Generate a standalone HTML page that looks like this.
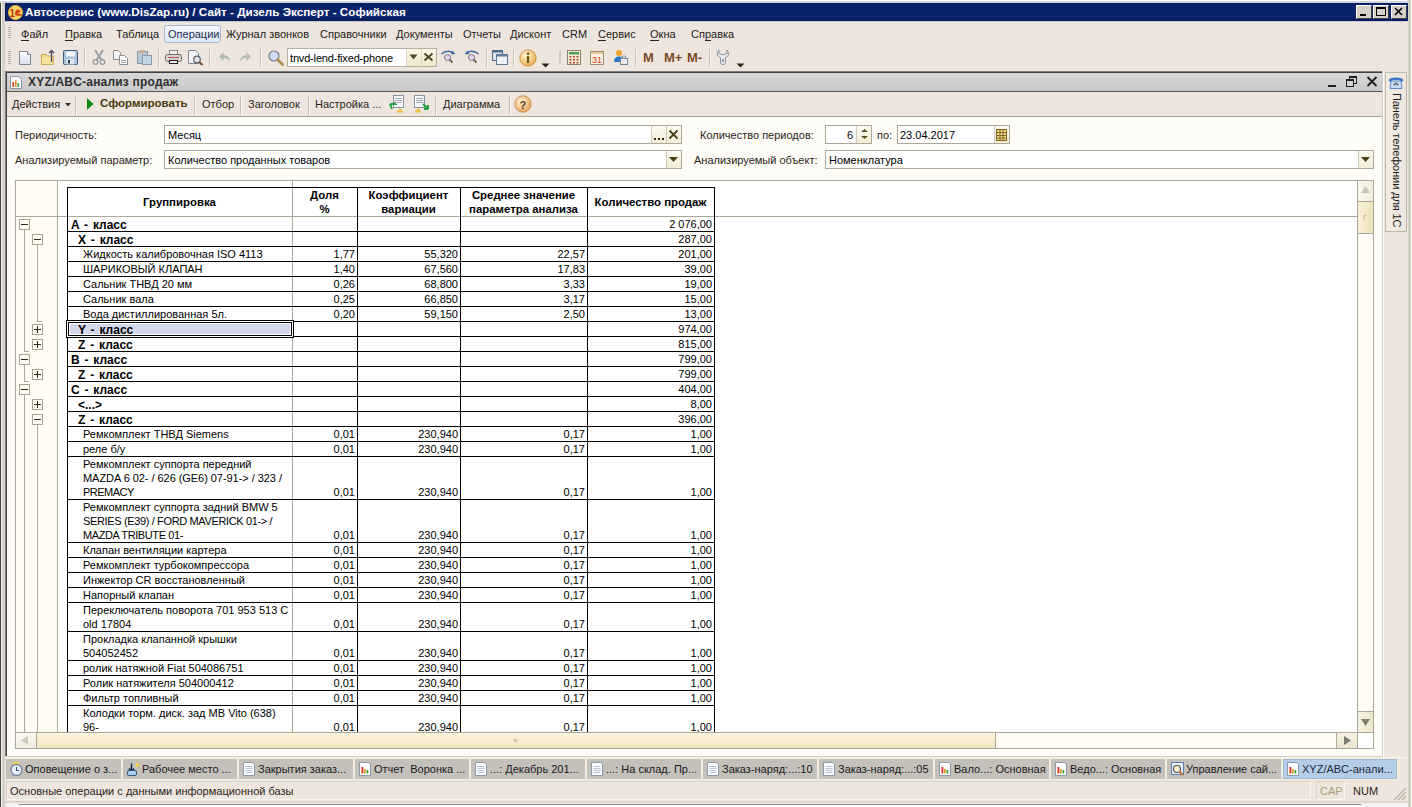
<!DOCTYPE html><html><head><meta charset="utf-8"><style>
html,body{margin:0;padding:0}
body{width:1412px;height:807px;position:relative;overflow:hidden;background:#EEE6DE;font-family:"Liberation Sans",sans-serif;color:#1a1a1a}
div{position:absolute;box-sizing:border-box}
.t{white-space:nowrap;line-height:13px}
.b{font-weight:bold}
u{text-decoration:none;border-bottom:1px solid currentColor}
</style></head><body>
<div style="left:0px;top:0px;width:1px;height:807px;background:#45453F"></div>
<div style="left:1px;top:0px;width:1px;height:807px;background:#F4F4EE"></div>
<div style="left:2px;top:0px;width:3px;height:807px;background:#D4D0C8"></div>
<div style="left:0px;top:0px;width:1412px;height:1px;background:#FFFFFF"></div>
<div style="left:0px;top:1px;width:1412px;height:2px;background:#D2D6E0"></div>
<div style="left:1408px;top:0px;width:4px;height:807px;background:#D4D0C8"></div>
<div style="left:1411px;top:0px;width:1px;height:807px;background:#FFFFFF"></div>
<div style="left:5px;top:3px;width:1403px;height:18px;background:linear-gradient(#08205E,#0A246A 20%,#0A246A 80%,#061A55)"></div>
<div style="left:5px;top:21px;width:1403px;height:1px;background:#C8CCD8"></div>
<svg style="position:absolute;left:8px;top:5px" width="15" height="15" viewBox="0 0 15 15"><circle cx="7.5" cy="7.5" r="7" fill="#FBD66A"/><circle cx="7.5" cy="7.5" r="7" fill="none" stroke="#F3B43A" stroke-width="1"/><text x="1.5" y="11.5" font-family="Liberation Sans" font-weight="bold" font-size="10" fill="#C8320A">1</text><path d="M7 9.5 Q7 4 10.5 4.5 Q13 5 12 7.5 L9.5 8 Q11 9.5 14 9 L13.5 10.5 Q8 11.5 7 9.5Z" fill="#D2400C"/></svg>
<div class="t" style="left:25px;top:5px;font-size:11.7px;color:#fff;font-weight:bold">Автосервис (www.DisZap.ru) / Сайт - Дизель Эксперт - Софийская</div>
<div style="left:1356px;top:5px;width:16px;height:14px;background:#D4D0C8;border-top:1px solid #fff;border-left:1px solid #fff;border-right:1px solid #404040;border-bottom:1px solid #404040"></div>
<div style="left:1373px;top:5px;width:16px;height:14px;background:#D4D0C8;border-top:1px solid #fff;border-left:1px solid #fff;border-right:1px solid #404040;border-bottom:1px solid #404040"></div>
<div style="left:1391px;top:5px;width:16px;height:14px;background:#D4D0C8;border-top:1px solid #fff;border-left:1px solid #fff;border-right:1px solid #404040;border-bottom:1px solid #404040"></div>
<svg style="position:absolute;left:1356px;top:5px" width="16" height="14" viewBox="0 0 16 14"><rect x="4" y="9" width="6" height="2" fill="#000"/></svg>
<svg style="position:absolute;left:1373px;top:5px" width="16" height="14" viewBox="0 0 16 14"><rect x="3.5" y="2.5" width="9" height="8" fill="none" stroke="#000"/><rect x="3" y="2" width="10" height="2" fill="#000"/></svg>
<svg style="position:absolute;left:1391px;top:5px" width="16" height="14" viewBox="0 0 16 14"><path d="M4 3 L11 10 M11 3 L4 10" stroke="#000" stroke-width="1.6"/></svg>
<div style="left:8px;top:27px;width:3px;height:12px;background:repeating-linear-gradient(#B8B0A0 0 1px,transparent 1px 2px)"></div>
<div style="left:164px;top:25px;width:57px;height:18px;border:1px solid #A9B6CC;border-radius:3px;background:linear-gradient(#F4F8FE,#DCE8FA)"></div>
<div class="t" style="left:21px;top:28px;font-size:11px;color:#222018"><u>Ф</u>айл</div>
<div class="t" style="left:65px;top:28px;font-size:11px;color:#222018"><u>П</u>равка</div>
<div class="t" style="left:116px;top:28px;font-size:11px;color:#222018">Таблица</div>
<div class="t" style="left:168px;top:28px;font-size:11px;color:#1E2E4E">Операции</div>
<div class="t" style="left:226px;top:28px;font-size:11px;color:#222018">Журнал звонков</div>
<div class="t" style="left:320px;top:28px;font-size:11px;color:#222018">Справочники</div>
<div class="t" style="left:396px;top:28px;font-size:11px;color:#222018">Документы</div>
<div class="t" style="left:463px;top:28px;font-size:11px;color:#222018">Отчеты</div>
<div class="t" style="left:510px;top:28px;font-size:11px;color:#222018">Дисконт</div>
<div class="t" style="left:562px;top:28px;font-size:11px;color:#222018">CRM</div>
<div class="t" style="left:598px;top:28px;font-size:11px;color:#222018"><u>С</u>ервис</div>
<div class="t" style="left:650px;top:28px;font-size:11px;color:#222018"><u>О</u>кна</div>
<div class="t" style="left:691px;top:28px;font-size:11px;color:#222018">Сп<u>р</u>авка</div>
<div style="left:8px;top:51px;width:3px;height:14px;background:repeating-linear-gradient(#B8B0A0 0 1px,transparent 1px 2px)"></div>
<svg style="position:absolute;left:19px;top:51px" width="13" height="15" viewBox="0 0 13 15"><defs><linearGradient id="gd" x1="0" y1="0" x2="0" y2="1"><stop offset="0" stop-color="#FFFFFF"/><stop offset="1" stop-color="#D8E0EE"/></linearGradient></defs><path d="M0.5 0.5 H8.5 L11.5 3.5 V13.5 H0.5 Z" fill="url(#gd)" stroke="#7E8690"/><path d="M8.5 0.5 V3.5 H11.5" fill="#E8ECF0" stroke="#7E8690"/></svg>
<svg style="position:absolute;left:40px;top:49px" width="16" height="17" viewBox="0 0 16 17"><path d="M1.5 5.5 H6 L7.5 7 H13.5 V15.5 H1.5 Z" fill="#F2D98A" stroke="#C9A955"/><rect x="2" y="8" width="11" height="7" fill="#F6E29C"/><path d="M11.5 13 V1.5 M9 4 L11.5 1.5 L14 4" stroke="#4A4A5A" stroke-width="1.3" fill="none"/></svg>
<svg style="position:absolute;left:63px;top:50px" width="15" height="15" viewBox="0 0 15 15"><rect x="0.5" y="0.5" width="14" height="14" rx="1" fill="#A9C2DA" stroke="#3E5E80"/><rect x="3" y="1.5" width="9" height="5" fill="#F0F4F8"/><rect x="3.5" y="9" width="8" height="5.5" fill="#E4E8EE"/><rect x="5" y="10" width="2" height="3.5" fill="#2A3A4A"/></svg>
<div style="left:84px;top:49px;width:1px;height:18px;background:#C8C0B2"></div>
<div style="left:85px;top:49px;width:1px;height:18px;background:#F8F6F2"></div>
<svg style="position:absolute;left:92px;top:49px" width="14" height="16" viewBox="0 0 14 16"><path d="M3 1 L9.5 11 M11 1 L4.5 11" stroke="#9AA2A8" stroke-width="2" fill="none"/><circle cx="3.5" cy="13" r="2.3" fill="none" stroke="#8E969C" stroke-width="1.2"/><circle cx="10.5" cy="13" r="2.3" fill="none" stroke="#8E969C" stroke-width="1.2"/></svg>
<svg style="position:absolute;left:113px;top:50px" width="16" height="15" viewBox="0 0 16 15"><path d="M0.5 0.5 H5.5 L7.5 2.5 V9.5 H0.5Z" fill="#F4F4F4" stroke="#8A8E92"/><path d="M6.5 5.5 H11.5 L14.5 8.5 V14.5 H6.5Z" fill="#F8F8F8" stroke="#8A8E92"/><path d="M8 10.5 H13 M8 12.5 H13" stroke="#A0A8B0"/></svg>
<svg style="position:absolute;left:137px;top:50px" width="15" height="15" viewBox="0 0 15 15"><rect x="0.5" y="1.5" width="10" height="12" fill="#B8C8D8" stroke="#8894A0"/><rect x="5.5" y="5.5" width="9" height="9" fill="#C4D4E4" stroke="#8C98A4"/><rect x="3" y="0" width="5" height="3" fill="#C8B090"/></svg>
<div style="left:158px;top:49px;width:1px;height:18px;background:#C8C0B2"></div>
<div style="left:159px;top:49px;width:1px;height:18px;background:#F8F6F2"></div>
<svg style="position:absolute;left:165px;top:50px" width="17" height="15" viewBox="0 0 17 15"><rect x="4.5" y="0.5" width="8" height="5" fill="#F4F4F4" stroke="#8A8A8A"/><rect x="0.5" y="4.5" width="16" height="7" rx="2" fill="#D8D4D0" stroke="#6E6A66"/><rect x="3" y="7" width="11" height="1" fill="#C05060"/><rect x="4" y="10" width="9" height="4" fill="#202020"/><rect x="5" y="11" width="7" height="2" fill="#F0F0F0"/></svg>
<svg style="position:absolute;left:188px;top:50px" width="16" height="16" viewBox="0 0 16 16"><path d="M0.5 0.5 H7.5 L10.5 3.5 V13.5 H0.5Z" fill="#F4F6FA" stroke="#7E8690"/><circle cx="9" cy="9.5" r="3.3" fill="#E0E4EC" stroke="#5A5A5A" stroke-width="1.2"/><path d="M11.3 12 L14.5 15" stroke="#7A4A2A" stroke-width="2"/></svg>
<div style="left:209px;top:49px;width:1px;height:18px;background:#C8C0B2"></div>
<div style="left:210px;top:49px;width:1px;height:18px;background:#F8F6F2"></div>
<svg style="position:absolute;left:218px;top:51px" width="13" height="12" viewBox="0 0 13 12"><path d="M5.5 1 L1 5.5 L5.5 10 V7 Q10 7 12 11 Q11.5 4 5.5 4Z" fill="#B4BCB4"/></svg>
<svg style="position:absolute;left:239px;top:51px" width="13" height="12" viewBox="0 0 13 12"><path d="M7.5 1 L12 5.5 L7.5 10 V7 Q3 7 1 11 Q1.5 4 7.5 4Z" fill="#B4BCB4"/></svg>
<div style="left:260px;top:49px;width:1px;height:18px;background:#C8C0B2"></div>
<div style="left:261px;top:49px;width:1px;height:18px;background:#F8F6F2"></div>
<svg style="position:absolute;left:268px;top:50px" width="16" height="16" viewBox="0 0 16 16"><circle cx="6" cy="6" r="5" fill="#D0DCF8" stroke="#787C88" stroke-width="1.2"/><path d="M9.5 9.5 L14.5 14.5" stroke="#B08850" stroke-width="2.6" stroke-linecap="round"/></svg>
<div style="left:287px;top:48px;width:150px;height:19px;background:#FFFFFF;border:1px solid #B8B0A0"></div>
<div class="t" style="left:290px;top:52px;font-size:11px;color:#000;letter-spacing:-0.17px">tnvd-lend-fixed-phone</div>
<div style="left:406px;top:49px;width:15px;height:17px;background:linear-gradient(#FBF8EC,#EEE6C8);border-left:1px solid #E0D8C4"></div>
<svg style="position:absolute;left:409px;top:54px" width="9" height="6" viewBox="0 0 9 6"><path d="M0.5 0.5 H8.5 L4.5 5.5Z" fill="#50482A"/></svg>
<div style="left:421px;top:49px;width:15px;height:17px;background:linear-gradient(#FBF8EC,#EEE6C8);border-left:1px solid #E0D8C4"></div>
<svg style="position:absolute;left:423px;top:52px" width="11" height="10" viewBox="0 0 11 10"><path d="M1.5 1.5 L9.5 8.5 M9.5 1.5 L1.5 8.5" stroke="#48401E" stroke-width="1.8"/></svg>
<svg style="position:absolute;left:440px;top:49px" width="17" height="15" viewBox="0 0 17 15"><path d="M1.5 5 Q7 0 14 4" stroke="#3C6CA8" stroke-width="1.6" fill="none"/><path d="M12 1.5 L15.5 5 L11 5.5Z" fill="#3C6CA8"/><circle cx="7.5" cy="8.5" r="3" fill="#E0D4F0" stroke="#787880"/><path d="M9.5 10.5 L12.5 13.5" stroke="#786050" stroke-width="1.8"/></svg>
<svg style="position:absolute;left:463px;top:49px" width="17" height="15" viewBox="0 0 17 15"><path d="M15.5 5 Q10 0 3 4" stroke="#3C6CA8" stroke-width="1.6" fill="none"/><path d="M5 1.5 L1.5 5 L6 5.5Z" fill="#3C6CA8"/><circle cx="8.5" cy="8.5" r="3" fill="#E0D4F0" stroke="#787880"/><path d="M10.5 10.5 L13.5 13.5" stroke="#786050" stroke-width="1.8"/></svg>
<div style="left:486px;top:49px;width:1px;height:18px;background:#C8C0B2"></div>
<div style="left:487px;top:49px;width:1px;height:18px;background:#F8F6F2"></div>
<svg style="position:absolute;left:492px;top:50px" width="16" height="15" viewBox="0 0 16 15"><rect x="0.5" y="0.5" width="10" height="10" fill="#DDE4EC" stroke="#4E6A88"/><rect x="0.5" y="0.5" width="10" height="2" fill="#4E6A88"/><rect x="4.5" y="4.5" width="11" height="10" fill="#EEF2F6" stroke="#5E7A98"/><rect x="4.5" y="4.5" width="11" height="2" fill="#5E7A98"/></svg>
<div style="left:513px;top:49px;width:1px;height:18px;background:#C8C0B2"></div>
<div style="left:514px;top:49px;width:1px;height:18px;background:#F8F6F2"></div>
<svg style="position:absolute;left:519px;top:49px" width="18" height="18" viewBox="0 0 18 18"><defs><radialGradient id="gi" cx="0.4" cy="0.35" r="0.7"><stop offset="0" stop-color="#FFF6D8"/><stop offset="1" stop-color="#E8A848"/></radialGradient></defs><circle cx="9" cy="9" r="8.2" fill="url(#gi)" stroke="#C88A3A" stroke-width="0.8"/><circle cx="9" cy="4.8" r="1.3" fill="#6A5A10"/><rect x="7.9" y="7" width="2.2" height="7" fill="#6A5A10"/></svg>
<svg style="position:absolute;left:541px;top:63px" width="9" height="5" viewBox="0 0 9 5"><path d="M0.5 0.5 H8.5 L4.5 4.5Z" fill="#2A2418"/></svg>
<div style="left:559px;top:51px;width:2px;height:14px;background:repeating-linear-gradient(#B8B0A0 0 1px,transparent 1px 2px)"></div>
<svg style="position:absolute;left:567px;top:50px" width="15" height="15" viewBox="0 0 15 15"><rect x="0.5" y="0.5" width="13" height="14" fill="#F4ECD8" stroke="#8A8070"/><rect x="2" y="2" width="10" height="2.5" fill="#4AA050"/><g fill="#A84020"><rect x="2.5" y="6" width="2" height="1.5"/><rect x="6" y="6" width="2" height="1.5"/><rect x="9.5" y="6" width="2" height="1.5"/><rect x="2.5" y="9" width="2" height="1.5"/><rect x="6" y="9" width="2" height="1.5"/><rect x="9.5" y="9" width="2" height="1.5"/><rect x="2.5" y="12" width="2" height="1.5"/><rect x="6" y="12" width="2" height="1.5"/><rect x="9.5" y="12" width="2" height="1.5"/></g></svg>
<svg style="position:absolute;left:590px;top:50px" width="15" height="15" viewBox="0 0 15 15"><rect x="0.5" y="1.5" width="13" height="13" fill="#F8F0E0" stroke="#A09070"/><rect x="1" y="2" width="12" height="2" fill="#E8C8A0"/><text x="2" y="13" font-family="Liberation Sans" font-size="9" fill="#D04020">31</text></svg>
<svg style="position:absolute;left:613px;top:49px" width="16" height="17" viewBox="0 0 16 17"><circle cx="6" cy="4" r="3" fill="#F0A030"/><path d="M1 13 Q1 7.5 6 7.5 Q11 7.5 11 13Z" fill="#2A78C8"/><rect x="7.5" y="9.5" width="7" height="6" fill="#E8ECF0" stroke="#7A8A9A"/><path d="M9 9.5 V8 Q11 5.5 13 8 V9.5" stroke="#7A8A9A" fill="none"/></svg>
<div style="left:635px;top:49px;width:1px;height:18px;background:#C8C0B2"></div>
<div style="left:636px;top:49px;width:1px;height:18px;background:#F8F6F2"></div>
<div class="t" style="left:643px;top:51px;font-size:13px;font-weight:bold;color:#7A4A28">M</div>
<div class="t" style="left:664px;top:51px;font-size:13px;font-weight:bold;color:#7A4A28">M+</div>
<div class="t" style="left:687px;top:51px;font-size:13px;font-weight:bold;color:#7A4A28">M-</div>
<div style="left:709px;top:49px;width:1px;height:18px;background:#C8C0B2"></div>
<div style="left:710px;top:49px;width:1px;height:18px;background:#F8F6F2"></div>
<svg style="position:absolute;left:716px;top:49px" width="14" height="17" viewBox="0 0 14 17"><path d="M3 1 V4.5 Q7 7 11 4.5 V1 Q13 3 12.5 6 Q11.5 8 9.5 8.5 V14.5 Q7 17 4.5 14.5 V8.5 Q2.5 8 1.5 6 Q1 3 3 1Z" fill="#E8EAEE" stroke="#8E96A0"/><rect x="6" y="10" width="2" height="3" fill="#9AA0A8"/></svg>
<svg style="position:absolute;left:736px;top:63px" width="9" height="5" viewBox="0 0 9 5"><path d="M0.5 0.5 H8.5 L4.5 4.5Z" fill="#2A2418"/></svg>
<div style="left:5px;top:71px;width:1379px;height:687px;background:#FFFFFF"></div>
<div style="left:5px;top:71px;width:1378px;height:686px;background:#D4D0C8"></div>
<div style="left:5px;top:71px;width:1377px;height:685px;background:#808080"></div>
<div style="left:6px;top:72px;width:1376px;height:684px;background:#404040"></div>
<div style="left:7px;top:73px;width:1375px;height:18px;background:linear-gradient(#D8D8DA,#C9C9C9)"></div>
<div style="left:7px;top:91px;width:1375px;height:1px;background:#5E5850"></div>
<div class="t" style="left:28px;top:76px;font-size:12px;font-weight:bold;color:#303030;letter-spacing:0.2px">XYZ/ABC-анализ продаж</div>
<div style="left:7px;top:92px;width:1375px;height:24px;background:#EEE6DE"></div>
<div style="left:7px;top:116px;width:1375px;height:1px;background:#A8A28E"></div>
<div style="left:7px;top:117px;width:1375px;height:639px;background:#FDFCF6"></div>
<svg style="position:absolute;left:10px;top:76px" width="12" height="13" viewBox="0 0 12 13"><path d="M0.5 0.5 H8.5 L11.5 3.5 V12.5 H0.5Z" fill="#FFFFFF" stroke="#8894A4"/><rect x="2.5" y="6" width="1.6" height="5" fill="#D03828"/><rect x="5" y="4" width="1.6" height="7" fill="#E09028"/><rect x="7.5" y="7" width="1.6" height="4" fill="#38A048"/></svg>
<div style="left:1328px;top:85px;width:8px;height:2px;background:#202020"></div>
<svg style="position:absolute;left:1345px;top:75px" width="13" height="13" viewBox="0 0 13 13"><rect x="4.5" y="1.5" width="7" height="7" fill="none" stroke="#202020"/><rect x="4" y="1" width="8" height="2" fill="#202020"/><rect x="1.5" y="4.5" width="7" height="7" fill="#D0D0D0" stroke="#202020"/><rect x="1" y="4" width="8" height="2" fill="#202020"/></svg>
<svg style="position:absolute;left:1366px;top:76px" width="12" height="11" viewBox="0 0 12 11"><path d="M1.5 1 L10.5 10 M10.5 1 L1.5 10" stroke="#202020" stroke-width="1.9"/></svg>
<div class="t" style="left:12px;top:98px;font-size:11px;color:#2a2418">Действия</div>
<svg style="position:absolute;left:65px;top:103px" width="6" height="4" viewBox="0 0 6 4"><path d="M0 0 H6 L3 3.5Z" fill="#3a3428"/></svg>
<div style="left:75px;top:96px;width:1px;height:19px;background:#C4BCAC"></div>
<div style="left:76px;top:96px;width:1px;height:19px;background:#FAF8F4"></div>
<svg style="position:absolute;left:87px;top:98px" width="7" height="13" viewBox="0 0 7 13"><path d="M0 0 L6.5 6 L0 12Z" fill="#148A14"/></svg>
<div class="t" style="left:100px;top:97px;font-size:11.5px;font-weight:bold;color:#4A3C10">Сформировать</div>
<div style="left:194px;top:96px;width:1px;height:19px;background:#C4BCAC"></div>
<div style="left:195px;top:96px;width:1px;height:19px;background:#FAF8F4"></div>
<div class="t" style="left:202px;top:98px;font-size:11px;color:#2a2418">Отбор</div>
<div style="left:240px;top:96px;width:1px;height:19px;background:#C4BCAC"></div>
<div style="left:241px;top:96px;width:1px;height:19px;background:#FAF8F4"></div>
<div class="t" style="left:248px;top:98px;font-size:11px;color:#2a2418">Заголовок</div>
<div style="left:308px;top:96px;width:1px;height:19px;background:#C4BCAC"></div>
<div style="left:309px;top:96px;width:1px;height:19px;background:#FAF8F4"></div>
<div class="t" style="left:315px;top:98px;font-size:11px;color:#2a2418">Настройка ...</div>
<svg style="position:absolute;left:389px;top:95px" width="17" height="18" viewBox="0 0 17 18"><rect x="4.5" y="0.5" width="10" height="12" fill="#F8F8F8" stroke="#8A94A0"/><path d="M6 3.5 H13 M6 5.5 H13 M6 7.5 H13" stroke="#A0A8B8"/><path d="M1 9 L6 9 L4.5 7.5 M1 9 L3 14" stroke="#20A040" stroke-width="2" fill="none"/><path d="M7 17.5 L11 13 L15 17.5Z" fill="#F0C050"/></svg>
<svg style="position:absolute;left:412px;top:95px" width="17" height="18" viewBox="0 0 17 18"><rect x="2.5" y="0.5" width="10" height="12" fill="#F8F8F8" stroke="#8A94A0"/><path d="M4 3.5 H11 M4 5.5 H11 M4 7.5 H11" stroke="#A0A8B8"/><path d="M16 14 L11 9 M16 14 V10 M16 14 H12" stroke="#20A040" stroke-width="2" fill="none"/><path d="M2 17.5 L6 13 L10 17.5Z" fill="#F0C050"/></svg>
<div style="left:435px;top:96px;width:1px;height:19px;background:#C4BCAC"></div>
<div style="left:436px;top:96px;width:1px;height:19px;background:#FAF8F4"></div>
<div class="t" style="left:443px;top:98px;font-size:11px;color:#2a2418">Диаграмма</div>
<div style="left:509px;top:96px;width:1px;height:19px;background:#C4BCAC"></div>
<div style="left:510px;top:96px;width:1px;height:19px;background:#FAF8F4"></div>
<svg style="position:absolute;left:514px;top:95px" width="18" height="18" viewBox="0 0 18 18"><defs><radialGradient id="gh" cx="0.4" cy="0.35" r="0.7"><stop offset="0" stop-color="#FFF2D8"/><stop offset="1" stop-color="#E8A050"/></radialGradient></defs><circle cx="9" cy="9" r="8.2" fill="url(#gh)" stroke="#C88040" stroke-width="0.8"/><text x="5.5" y="13.5" font-family="Liberation Sans" font-weight="bold" font-size="11" fill="#5A4020">?</text></svg>
<div class="t" style="left:15px;top:129px;font-size:11px;color:#2a2418">Периодичность:</div>
<div style="left:164px;top:125px;width:518px;height:19px;background:#FFFFFF;border:1px solid #ACA897"></div>
<div class="t" style="left:168px;top:129px;font-size:11px;color:#000">Месяц</div>
<div style="left:651px;top:126px;width:15px;height:17px;background:linear-gradient(#FCFAF2,#F2ECD8);border-left:1px solid #CFCABA"></div>
<div style="left:666px;top:126px;width:15px;height:17px;background:linear-gradient(#FCFAF2,#F2ECD8);border-left:1px solid #CFCABA"></div>
<svg style="position:absolute;left:654px;top:138px" width="10" height="3" viewBox="0 0 10 3"><rect x="0" y="0" width="2" height="2" fill="#302810"/><rect x="4" y="0" width="2" height="2" fill="#302810"/><rect x="8" y="0" width="2" height="2" fill="#302810"/></svg>
<svg style="position:absolute;left:668px;top:129px" width="11" height="11" viewBox="0 0 11 11"><path d="M1.5 1.5 L9.5 9.5 M9.5 1.5 L1.5 9.5" stroke="#4A4018" stroke-width="1.8"/></svg>
<div class="t" style="left:15px;top:154px;font-size:11px;color:#2a2418">Анализируемый параметр:</div>
<div style="left:164px;top:150px;width:518px;height:19px;background:#FFFFFF;border:1px solid #ACA897"></div>
<div class="t" style="left:168px;top:154px;font-size:11px;color:#000">Количество проданных товаров</div>
<div style="left:666px;top:151px;width:15px;height:17px;background:linear-gradient(#FCFAF2,#F2ECD8);border-left:1px solid #CFCABA"></div>
<svg style="position:absolute;left:669px;top:157px" width="9" height="5" viewBox="0 0 9 5"><path d="M0 0 H9 L4.5 5Z" fill="#4A4018"/></svg>
<div class="t" style="left:700px;top:129px;font-size:11px;color:#2a2418">Количество периодов:</div>
<div style="left:825px;top:125px;width:47px;height:19px;background:#FFFFFF;border:1px solid #ACA897"></div>
<div class="t" style="right:559px;top:129px;font-size:11px;color:#000">6</div>
<div style="left:856px;top:126px;width:15px;height:17px;background:linear-gradient(#FCFAF2,#F2ECD8);border-left:1px solid #CFCABA"></div>
<svg style="position:absolute;left:860px;top:128px" width="9" height="12" viewBox="0 0 9 12"><path d="M1 4 L4.5 1 L8 4Z M1 8 L4.5 11 L8 8Z" fill="#5A5020"/></svg>
<div class="t" style="left:877px;top:129px;font-size:11px;color:#2a2418">по:</div>
<div style="left:897px;top:125px;width:113px;height:19px;background:#FFFFFF;border:1px solid #ACA897"></div>
<div class="t" style="left:900px;top:129px;font-size:11px;color:#000">23.04.2017</div>
<div style="left:994px;top:126px;width:15px;height:17px;background:linear-gradient(#FCFAF2,#F2ECD8);border-left:1px solid #CFCABA"></div>
<svg style="position:absolute;left:996px;top:128px" width="11" height="13" viewBox="0 0 11 13"><rect x="0.5" y="1.5" width="10" height="11" fill="#F0D888" stroke="#806820"/><path d="M0.5 4.5 H10.5 M0.5 7.5 H10.5 M0.5 10 H10.5 M4 1.5 V12.5 M7 1.5 V12.5" stroke="#806820"/></svg>
<div class="t" style="left:694px;top:154px;font-size:11px;color:#2a2418">Анализируемый объект:</div>
<div style="left:825px;top:150px;width:549px;height:19px;background:#FFFFFF;border:1px solid #ACA897"></div>
<div class="t" style="left:829px;top:154px;font-size:11px;color:#000">Номенклатура</div>
<div style="left:1358px;top:151px;width:15px;height:17px;background:linear-gradient(#FCFAF2,#F2ECD8);border-left:1px solid #CFCABA"></div>
<svg style="position:absolute;left:1361px;top:157px" width="9" height="5" viewBox="0 0 9 5"><path d="M0 0 H9 L4.5 5Z" fill="#4A4018"/></svg>
<div style="left:15px;top:180px;width:1359px;height:569px;background:#FFFFFF;border:1px solid #ACA899"></div>
<div style="left:16px;top:181px;width:41px;height:551px;background:#FFFCF3"></div>
<div style="left:57px;top:181px;width:1px;height:552px;background:#ACA899"></div>
<div style="left:292px;top:181px;width:1px;height:552px;background:#ACA899"></div>
<div style="left:16px;top:216px;width:1341px;height:1px;background:#ACA899"></div>
<div style="left:16px;top:181px;width:1341px;height:551px;overflow:hidden">
<div style="left:51px;top:6px;width:648px;height:1px;background:#000"></div>
<div class="t" style="left:51px;width:225px;text-align:center;top:15px;font-size:11.4px;font-weight:bold;color:#000">Группировка</div>
<div class="t" style="left:276px;width:65px;text-align:center;top:8px;font-size:11.4px;font-weight:bold;color:#000">Доля</div>
<div class="t" style="left:276px;width:65px;text-align:center;top:22px;font-size:11.4px;font-weight:bold;color:#000">%</div>
<div class="t" style="left:341px;width:103px;text-align:center;top:8px;font-size:11.4px;font-weight:bold;color:#000">Коэффициент</div>
<div class="t" style="left:341px;width:103px;text-align:center;top:22px;font-size:11.4px;font-weight:bold;color:#000">вариации</div>
<div class="t" style="left:444px;width:127px;text-align:center;top:8px;font-size:11.4px;font-weight:bold;color:#000">Среднее значение</div>
<div class="t" style="left:444px;width:127px;text-align:center;top:22px;font-size:11.4px;font-weight:bold;color:#000">параметра анализа</div>
<div class="t" style="left:571px;width:127px;text-align:center;top:15px;font-size:11.4px;font-weight:bold;color:#000">Количество продаж</div>
<div class="t" style="left:55px;top:38px;font-size:12px;font-weight:bold;color:#000;word-spacing:1.5px">A - класс</div>
<div class="t" style="right:645px;top:37px;font-size:11px;color:#000">2 076,00</div>
<div style="left:51px;top:50px;width:648px;height:1px;background:#000"></div>
<div class="t" style="left:62px;top:53px;font-size:12px;font-weight:bold;color:#000;word-spacing:1.5px">X - класс</div>
<div class="t" style="right:645px;top:52px;font-size:11px;color:#000">287,00</div>
<div style="left:51px;top:65px;width:648px;height:1px;background:#000"></div>
<div class="t" style="left:67px;top:67px;font-size:11px;color:#000">Жидкость калибровочная ISO 4113</div>
<div class="t" style="right:1002px;top:67px;font-size:11px;color:#000">1,77</div>
<div class="t" style="right:899px;top:67px;font-size:11px;color:#000">55,320</div>
<div class="t" style="right:772px;top:67px;font-size:11px;color:#000">22,57</div>
<div class="t" style="right:645px;top:67px;font-size:11px;color:#000">201,00</div>
<div style="left:51px;top:80px;width:648px;height:1px;background:#000"></div>
<div class="t" style="left:67px;top:82px;font-size:11px;color:#000">ШАРИКОВЫЙ КЛАПАН</div>
<div class="t" style="right:1002px;top:82px;font-size:11px;color:#000">1,40</div>
<div class="t" style="right:899px;top:82px;font-size:11px;color:#000">67,560</div>
<div class="t" style="right:772px;top:82px;font-size:11px;color:#000">17,83</div>
<div class="t" style="right:645px;top:82px;font-size:11px;color:#000">39,00</div>
<div style="left:51px;top:95px;width:648px;height:1px;background:#000"></div>
<div class="t" style="left:67px;top:97px;font-size:11px;color:#000">Сальник ТНВД 20 мм</div>
<div class="t" style="right:1002px;top:97px;font-size:11px;color:#000">0,26</div>
<div class="t" style="right:899px;top:97px;font-size:11px;color:#000">68,800</div>
<div class="t" style="right:772px;top:97px;font-size:11px;color:#000">3,33</div>
<div class="t" style="right:645px;top:97px;font-size:11px;color:#000">19,00</div>
<div style="left:51px;top:110px;width:648px;height:1px;background:#000"></div>
<div class="t" style="left:67px;top:112px;font-size:11px;color:#000">Сальник вала</div>
<div class="t" style="right:1002px;top:112px;font-size:11px;color:#000">0,25</div>
<div class="t" style="right:899px;top:112px;font-size:11px;color:#000">66,850</div>
<div class="t" style="right:772px;top:112px;font-size:11px;color:#000">3,17</div>
<div class="t" style="right:645px;top:112px;font-size:11px;color:#000">15,00</div>
<div style="left:51px;top:125px;width:648px;height:1px;background:#000"></div>
<div class="t" style="left:67px;top:127px;font-size:11px;color:#000">Вода дистиллированная 5л.</div>
<div class="t" style="right:1002px;top:127px;font-size:11px;color:#000">0,20</div>
<div class="t" style="right:899px;top:127px;font-size:11px;color:#000">59,150</div>
<div class="t" style="right:772px;top:127px;font-size:11px;color:#000">2,50</div>
<div class="t" style="right:645px;top:127px;font-size:11px;color:#000">13,00</div>
<div style="left:51px;top:140px;width:648px;height:1px;background:#000"></div>
<div class="t" style="left:62px;top:143px;font-size:12px;font-weight:bold;color:#000;word-spacing:1.5px">Y - класс</div>
<div class="t" style="right:645px;top:142px;font-size:11px;color:#000">974,00</div>
<div style="left:51px;top:155px;width:648px;height:1px;background:#000"></div>
<div class="t" style="left:62px;top:158px;font-size:12px;font-weight:bold;color:#000;word-spacing:1.5px">Z - класс</div>
<div class="t" style="right:645px;top:157px;font-size:11px;color:#000">815,00</div>
<div style="left:51px;top:170px;width:648px;height:1px;background:#000"></div>
<div class="t" style="left:55px;top:173px;font-size:12px;font-weight:bold;color:#000;word-spacing:1.5px">B - класс</div>
<div class="t" style="right:645px;top:172px;font-size:11px;color:#000">799,00</div>
<div style="left:51px;top:185px;width:648px;height:1px;background:#000"></div>
<div class="t" style="left:62px;top:188px;font-size:12px;font-weight:bold;color:#000;word-spacing:1.5px">Z - класс</div>
<div class="t" style="right:645px;top:187px;font-size:11px;color:#000">799,00</div>
<div style="left:51px;top:200px;width:648px;height:1px;background:#000"></div>
<div class="t" style="left:55px;top:203px;font-size:12px;font-weight:bold;color:#000;word-spacing:1.5px">C - класс</div>
<div class="t" style="right:645px;top:202px;font-size:11px;color:#000">404,00</div>
<div style="left:51px;top:215px;width:648px;height:1px;background:#000"></div>
<div class="t" style="left:62px;top:218px;font-size:12px;font-weight:bold;color:#000;word-spacing:1.5px">&lt;...&gt;</div>
<div class="t" style="right:645px;top:217px;font-size:11px;color:#000">8,00</div>
<div style="left:51px;top:230px;width:648px;height:1px;background:#000"></div>
<div class="t" style="left:62px;top:233px;font-size:12px;font-weight:bold;color:#000;word-spacing:1.5px">Z - класс</div>
<div class="t" style="right:645px;top:232px;font-size:11px;color:#000">396,00</div>
<div style="left:51px;top:245px;width:648px;height:1px;background:#000"></div>
<div class="t" style="left:67px;top:247px;font-size:11px;color:#000">Ремкомплект ТНВД Siemens</div>
<div class="t" style="right:1002px;top:247px;font-size:11px;color:#000">0,01</div>
<div class="t" style="right:899px;top:247px;font-size:11px;color:#000">230,940</div>
<div class="t" style="right:772px;top:247px;font-size:11px;color:#000">0,17</div>
<div class="t" style="right:645px;top:247px;font-size:11px;color:#000">1,00</div>
<div style="left:51px;top:260px;width:648px;height:1px;background:#000"></div>
<div class="t" style="left:67px;top:262px;font-size:11px;color:#000">реле б/у</div>
<div class="t" style="right:1002px;top:262px;font-size:11px;color:#000">0,01</div>
<div class="t" style="right:899px;top:262px;font-size:11px;color:#000">230,940</div>
<div class="t" style="right:772px;top:262px;font-size:11px;color:#000">0,17</div>
<div class="t" style="right:645px;top:262px;font-size:11px;color:#000">1,00</div>
<div style="left:51px;top:275px;width:648px;height:1px;background:#000"></div>
<div class="t" style="left:67px;top:277px;font-size:11px;color:#000">Ремкомплект суппорта передний</div>
<div class="t" style="left:67px;top:291px;font-size:11px;color:#000;letter-spacing:-0.05px">MAZDA 6 02- / 626 (GE6) 07-91-&gt; / 323 /</div>
<div class="t" style="left:67px;top:305px;font-size:11px;color:#000;letter-spacing:-0.5px">PREMACY</div>
<div class="t" style="right:1002px;top:305px;font-size:11px;color:#000">0,01</div>
<div class="t" style="right:899px;top:305px;font-size:11px;color:#000">230,940</div>
<div class="t" style="right:772px;top:305px;font-size:11px;color:#000">0,17</div>
<div class="t" style="right:645px;top:305px;font-size:11px;color:#000">1,00</div>
<div style="left:51px;top:318px;width:648px;height:1px;background:#000"></div>
<div class="t" style="left:67px;top:320px;font-size:11px;color:#000">Ремкомплект суппорта задний BMW 5</div>
<div class="t" style="left:67px;top:334px;font-size:11px;color:#000;letter-spacing:-0.36px">SERIES (E39) / FORD MAVERICK 01-&gt; /</div>
<div class="t" style="left:67px;top:348px;font-size:11px;color:#000;letter-spacing:-0.4px">MAZDA TRIBUTE 01-</div>
<div class="t" style="right:1002px;top:348px;font-size:11px;color:#000">0,01</div>
<div class="t" style="right:899px;top:348px;font-size:11px;color:#000">230,940</div>
<div class="t" style="right:772px;top:348px;font-size:11px;color:#000">0,17</div>
<div class="t" style="right:645px;top:348px;font-size:11px;color:#000">1,00</div>
<div style="left:51px;top:361px;width:648px;height:1px;background:#000"></div>
<div class="t" style="left:67px;top:363px;font-size:11px;color:#000">Клапан вентиляции картера</div>
<div class="t" style="right:1002px;top:363px;font-size:11px;color:#000">0,01</div>
<div class="t" style="right:899px;top:363px;font-size:11px;color:#000">230,940</div>
<div class="t" style="right:772px;top:363px;font-size:11px;color:#000">0,17</div>
<div class="t" style="right:645px;top:363px;font-size:11px;color:#000">1,00</div>
<div style="left:51px;top:376px;width:648px;height:1px;background:#000"></div>
<div class="t" style="left:67px;top:378px;font-size:11px;color:#000">Ремкомплект турбокомпрессора</div>
<div class="t" style="right:1002px;top:378px;font-size:11px;color:#000">0,01</div>
<div class="t" style="right:899px;top:378px;font-size:11px;color:#000">230,940</div>
<div class="t" style="right:772px;top:378px;font-size:11px;color:#000">0,17</div>
<div class="t" style="right:645px;top:378px;font-size:11px;color:#000">1,00</div>
<div style="left:51px;top:391px;width:648px;height:1px;background:#000"></div>
<div class="t" style="left:67px;top:393px;font-size:11px;color:#000">Инжектор CR восстановленный</div>
<div class="t" style="right:1002px;top:393px;font-size:11px;color:#000">0,01</div>
<div class="t" style="right:899px;top:393px;font-size:11px;color:#000">230,940</div>
<div class="t" style="right:772px;top:393px;font-size:11px;color:#000">0,17</div>
<div class="t" style="right:645px;top:393px;font-size:11px;color:#000">1,00</div>
<div style="left:51px;top:406px;width:648px;height:1px;background:#000"></div>
<div class="t" style="left:67px;top:408px;font-size:11px;color:#000">Напорный клапан</div>
<div class="t" style="right:1002px;top:408px;font-size:11px;color:#000">0,01</div>
<div class="t" style="right:899px;top:408px;font-size:11px;color:#000">230,940</div>
<div class="t" style="right:772px;top:408px;font-size:11px;color:#000">0,17</div>
<div class="t" style="right:645px;top:408px;font-size:11px;color:#000">1,00</div>
<div style="left:51px;top:421px;width:648px;height:1px;background:#000"></div>
<div class="t" style="left:67px;top:423px;font-size:11px;color:#000">Переключатель поворота 701 953 513 C</div>
<div class="t" style="left:67px;top:437px;font-size:11px;color:#000">old 17804</div>
<div class="t" style="right:1002px;top:437px;font-size:11px;color:#000">0,01</div>
<div class="t" style="right:899px;top:437px;font-size:11px;color:#000">230,940</div>
<div class="t" style="right:772px;top:437px;font-size:11px;color:#000">0,17</div>
<div class="t" style="right:645px;top:437px;font-size:11px;color:#000">1,00</div>
<div style="left:51px;top:450px;width:648px;height:1px;background:#000"></div>
<div class="t" style="left:67px;top:452px;font-size:11px;color:#000">Прокладка клапанной крышки</div>
<div class="t" style="left:67px;top:466px;font-size:11px;color:#000">504052452</div>
<div class="t" style="right:1002px;top:466px;font-size:11px;color:#000">0,01</div>
<div class="t" style="right:899px;top:466px;font-size:11px;color:#000">230,940</div>
<div class="t" style="right:772px;top:466px;font-size:11px;color:#000">0,17</div>
<div class="t" style="right:645px;top:466px;font-size:11px;color:#000">1,00</div>
<div style="left:51px;top:479px;width:648px;height:1px;background:#000"></div>
<div class="t" style="left:67px;top:481px;font-size:11px;color:#000">ролик натяжной Fiat 504086751</div>
<div class="t" style="right:1002px;top:481px;font-size:11px;color:#000">0,01</div>
<div class="t" style="right:899px;top:481px;font-size:11px;color:#000">230,940</div>
<div class="t" style="right:772px;top:481px;font-size:11px;color:#000">0,17</div>
<div class="t" style="right:645px;top:481px;font-size:11px;color:#000">1,00</div>
<div style="left:51px;top:494px;width:648px;height:1px;background:#000"></div>
<div class="t" style="left:67px;top:496px;font-size:11px;color:#000">Ролик натяжителя 504000412</div>
<div class="t" style="right:1002px;top:496px;font-size:11px;color:#000">0,01</div>
<div class="t" style="right:899px;top:496px;font-size:11px;color:#000">230,940</div>
<div class="t" style="right:772px;top:496px;font-size:11px;color:#000">0,17</div>
<div class="t" style="right:645px;top:496px;font-size:11px;color:#000">1,00</div>
<div style="left:51px;top:509px;width:648px;height:1px;background:#000"></div>
<div class="t" style="left:67px;top:511px;font-size:11px;color:#000">Фильтр топливный</div>
<div class="t" style="right:1002px;top:511px;font-size:11px;color:#000">0,01</div>
<div class="t" style="right:899px;top:511px;font-size:11px;color:#000">230,940</div>
<div class="t" style="right:772px;top:511px;font-size:11px;color:#000">0,17</div>
<div class="t" style="right:645px;top:511px;font-size:11px;color:#000">1,00</div>
<div style="left:51px;top:524px;width:648px;height:1px;background:#000"></div>
<div class="t" style="left:67px;top:526px;font-size:11px;color:#000">Колодки торм. диск. зад MB Vito (638)</div>
<div class="t" style="left:67px;top:540px;font-size:11px;color:#000">96-</div>
<div class="t" style="right:1002px;top:540px;font-size:11px;color:#000">0,01</div>
<div class="t" style="right:899px;top:540px;font-size:11px;color:#000">230,940</div>
<div class="t" style="right:772px;top:540px;font-size:11px;color:#000">0,17</div>
<div class="t" style="right:645px;top:540px;font-size:11px;color:#000">1,00</div>
<div style="left:51px;top:553px;width:648px;height:1px;background:#000"></div>
<div style="left:51px;top:6px;width:1px;height:546px;background:#000"></div>
<div style="left:341px;top:6px;width:1px;height:546px;background:#000"></div>
<div style="left:444px;top:6px;width:1px;height:546px;background:#000"></div>
<div style="left:571px;top:6px;width:1px;height:546px;background:#000"></div>
<div style="left:698px;top:6px;width:1px;height:546px;background:#000"></div>
<div style="left:50px;top:139px;width:228px;height:18px;border:1px solid #000;background:#fff"></div>
<div style="left:52px;top:141px;width:224px;height:14px;border:1px solid #000;background:#fff"></div>
<div style="left:54px;top:143px;width:220px;height:10px;background:#D4D8EE"></div>
<div class="t" style="left:62px;top:143px;font-size:12px;font-weight:bold;color:#000;word-spacing:1.5px">Y - класс</div>
<div style="left:3px;top:38px;width:11px;height:11px;border:1px solid #A8A490;background:#FFFDF4"></div>
<div style="left:5px;top:43px;width:7px;height:1px;background:#302818"></div>
<div style="left:8px;top:49px;width:1px;height:121px;background:#ACA899"></div>
<div style="left:8px;top:170px;width:5px;height:1px;background:#ACA899"></div>
<div style="left:16px;top:53px;width:11px;height:11px;border:1px solid #A8A490;background:#FFFDF4"></div>
<div style="left:18px;top:58px;width:7px;height:1px;background:#302818"></div>
<div style="left:21px;top:64px;width:1px;height:76px;background:#ACA899"></div>
<div style="left:21px;top:140px;width:5px;height:1px;background:#ACA899"></div>
<div style="left:16px;top:143px;width:11px;height:11px;border:1px solid #A8A490;background:#FFFDF4"></div>
<div style="left:18px;top:148px;width:7px;height:1px;background:#302818"></div>
<div style="left:21px;top:145px;width:1px;height:7px;background:#302818"></div>
<div style="left:16px;top:158px;width:11px;height:11px;border:1px solid #A8A490;background:#FFFDF4"></div>
<div style="left:18px;top:163px;width:7px;height:1px;background:#302818"></div>
<div style="left:21px;top:160px;width:1px;height:7px;background:#302818"></div>
<div style="left:3px;top:173px;width:11px;height:11px;border:1px solid #A8A490;background:#FFFDF4"></div>
<div style="left:5px;top:178px;width:7px;height:1px;background:#302818"></div>
<div style="left:8px;top:184px;width:1px;height:16px;background:#ACA899"></div>
<div style="left:8px;top:200px;width:5px;height:1px;background:#ACA899"></div>
<div style="left:16px;top:188px;width:11px;height:11px;border:1px solid #A8A490;background:#FFFDF4"></div>
<div style="left:18px;top:193px;width:7px;height:1px;background:#302818"></div>
<div style="left:21px;top:190px;width:1px;height:7px;background:#302818"></div>
<div style="left:3px;top:203px;width:11px;height:11px;border:1px solid #A8A490;background:#FFFDF4"></div>
<div style="left:5px;top:208px;width:7px;height:1px;background:#302818"></div>
<div style="left:8px;top:214px;width:1px;height:345px;background:#ACA899"></div>
<div style="left:16px;top:218px;width:11px;height:11px;border:1px solid #A8A490;background:#FFFDF4"></div>
<div style="left:18px;top:223px;width:7px;height:1px;background:#302818"></div>
<div style="left:21px;top:220px;width:1px;height:7px;background:#302818"></div>
<div style="left:16px;top:233px;width:11px;height:11px;border:1px solid #A8A490;background:#FFFDF4"></div>
<div style="left:18px;top:238px;width:7px;height:1px;background:#302818"></div>
<div style="left:21px;top:244px;width:1px;height:315px;background:#ACA899"></div>
</div>
<div style="left:1357px;top:181px;width:16px;height:551px;background:#FEFCF4"></div>
<div style="left:1357px;top:181px;width:1px;height:567px;background:#ACA899"></div>
<div style="left:1358px;top:181px;width:15px;height:20px;background:linear-gradient(90deg,#FAF7EC,#F2EEDC)"></div>
<svg style="position:absolute;left:1361px;top:186px" width="9" height="7" viewBox="0 0 9 7"><path d="M0 7 L4.5 0 L9 7Z" fill="#C8C4B6"/></svg>
<div style="left:1357px;top:201px;width:16px;height:1px;background:#ACA899"></div>
<div style="left:1358px;top:202px;width:15px;height:31px;background:linear-gradient(90deg,#F8F2DA,#EEE2B8)"></div>
<svg style="position:absolute;left:1363px;top:214px" width="5" height="6" viewBox="0 0 5 6"><path d="M1 6 V2 Q1 1 2.5 1 L4 1.5" stroke="#C8C0A4" stroke-width="1.2" fill="none"/></svg>
<div style="left:1357px;top:233px;width:16px;height:1px;background:#ACA899"></div>
<div style="left:1357px;top:711px;width:16px;height:1px;background:#ACA899"></div>
<div style="left:1358px;top:712px;width:15px;height:21px;background:linear-gradient(90deg,#F6F2E2,#ECE6CC)"></div>
<svg style="position:absolute;left:1361px;top:719px" width="9" height="7" viewBox="0 0 9 7"><path d="M0 0 H9 L4.5 7Z" fill="#807C70"/></svg>
<div style="left:16px;top:732px;width:1357px;height:1px;background:#ACA899"></div>
<div style="left:16px;top:733px;width:1341px;height:15px;background:#FEFCF4"></div>
<div style="left:16px;top:733px;width:20px;height:15px;background:linear-gradient(#FAF8F0,#F0ECDE)"></div>
<svg style="position:absolute;left:21px;top:736px" width="7" height="9" viewBox="0 0 7 9"><path d="M7 0 V9 L0 4.5Z" fill="#CCC8BC"/></svg>
<div style="left:36px;top:733px;width:1px;height:15px;background:#ACA899"></div>
<div style="left:37px;top:733px;width:958px;height:15px;background:linear-gradient(#FBF5DE,#EFE4C0)"></div>
<svg style="position:absolute;left:513px;top:738px" width="5" height="5" viewBox="0 0 5 5"><circle cx="2.5" cy="2.5" r="1.6" fill="#C8C0A8"/></svg>
<div style="left:995px;top:733px;width:1px;height:15px;background:#ACA899"></div>
<div style="left:1336px;top:733px;width:1px;height:15px;background:#ACA899"></div>
<div style="left:1337px;top:733px;width:20px;height:15px;background:linear-gradient(#F6F2E4,#EAE4D0)"></div>
<svg style="position:absolute;left:1344px;top:736px" width="7" height="9" viewBox="0 0 7 9"><path d="M0 0 V9 L7 4.5Z" fill="#7C786C"/></svg>
<div style="left:1385px;top:72px;width:22px;height:160px;border:1px solid #BCB8A8;background:linear-gradient(90deg,#F2ECE2,#EEE6DE)"></div>
<svg style="position:absolute;left:1388px;top:77px" width="16" height="12" viewBox="0 0 16 12"><path d="M0.5 3.5 Q1 0.5 8 0.5 Q15 0.5 15.5 3.5 L13 5 L11.5 3 H4.5 L3 5Z" fill="#3C78C8"/><path d="M3 4 H13 L14 11.5 H2Z" fill="#C8DCF4" stroke="#5A8AC8"/><circle cx="6.5" cy="7.5" r="1" fill="#404850"/><circle cx="9.5" cy="7.5" r="1" fill="#404850"/><circle cx="8" cy="6" r="0.9" fill="#606870"/></svg>
<div class="t" style="left:1390px;top:93px;font-size:11px;line-height:13px;writing-mode:vertical-rl;letter-spacing:-0.1px;color:#1a1a1a">Панель телефонии для 1С</div>
<div style="left:5px;top:758px;width:1403px;height:22px;background:#EEE6DE"></div>
<div style="left:5px;top:757px;width:1403px;height:1px;background:#F6F2E6"></div>
<div style="left:6px;top:758px;width:1392px;height:22px;background:#F2EEDE"></div>
<div style="left:6px;top:759px;width:115px;height:20px;background:#C4C0BA"></div>
<svg style="position:absolute;left:10px;top:762px" width="14" height="14" viewBox="0 0 14 14"><rect x="3" y="0" width="6" height="3" fill="#F0D040"/><circle cx="6.5" cy="8" r="5.5" fill="#E8EEF8" stroke="#7888A0" stroke-width="1.4"/><path d="M6.5 5 V8.5 H9" stroke="#304060" fill="none"/></svg>
<div class="t" style="left:25px;top:763px;font-size:11px;color:#1a1a1a">Оповещение о з...</div>
<div style="left:123px;top:759px;width:114px;height:20px;background:#C4C0BA"></div>
<svg style="position:absolute;left:127px;top:762px" width="14" height="14" viewBox="0 0 14 14"><path d="M8 3 L10.5 0.5 L13 3 L10.5 5.5Z" fill="#F2D050"/><path d="M4.5 1.5 V9 M2 6.5 L4.5 9 L7 6.5" stroke="#102040" stroke-width="1.4" fill="none"/><rect x="0.5" y="8.5" width="9" height="5" rx="1.5" fill="#A8D0F0" stroke="#305880"/></svg>
<div class="t" style="left:142px;top:763px;font-size:11px;color:#1a1a1a">Рабочее место ...</div>
<div style="left:239px;top:759px;width:114px;height:20px;background:#C4C0BA"></div>
<svg style="position:absolute;left:243px;top:762px" width="14" height="14" viewBox="0 0 14 14"><path d="M0.5 0.5 H9.5 L11.5 2.5 V13.5 H0.5Z" fill="#FAFCFE" stroke="#8C98A8"/><path d="M2.5 4.5 H9.5 M2.5 6.5 H9.5 M2.5 8.5 H9.5 M2.5 10.5 H9.5" stroke="#B8C4D4"/></svg>
<div class="t" style="left:258px;top:763px;font-size:11px;color:#1a1a1a">Закрытия заказ...</div>
<div style="left:355px;top:759px;width:114px;height:20px;background:#C4C0BA"></div>
<svg style="position:absolute;left:359px;top:762px" width="14" height="14" viewBox="0 0 14 14"><path d="M0.5 0.5 H9.5 L11.5 2.5 V13.5 H0.5Z" fill="#FFFFFF" stroke="#8C98A8"/><rect x="2.5" y="5" width="1.8" height="6.5" fill="#D03020"/><rect x="5" y="7" width="1.8" height="4.5" fill="#E0A020"/><rect x="7.5" y="8" width="1.8" height="3.5" fill="#40A040"/></svg>
<div class="t" style="left:374px;top:763px;font-size:11px;color:#1a1a1a">Отчет&nbsp; Воронка ...</div>
<div style="left:471px;top:759px;width:114px;height:20px;background:#C4C0BA"></div>
<svg style="position:absolute;left:475px;top:762px" width="14" height="14" viewBox="0 0 14 14"><path d="M0.5 0.5 H9.5 L11.5 2.5 V13.5 H0.5Z" fill="#FAFCFE" stroke="#8C98A8"/><path d="M2.5 4.5 H9.5 M2.5 6.5 H9.5 M2.5 8.5 H9.5 M2.5 10.5 H9.5" stroke="#B8C4D4"/></svg>
<div class="t" style="left:490px;top:763px;font-size:11px;color:#1a1a1a">...: Декабрь 201...</div>
<div style="left:587px;top:759px;width:114px;height:20px;background:#C4C0BA"></div>
<svg style="position:absolute;left:591px;top:762px" width="14" height="14" viewBox="0 0 14 14"><path d="M0.5 0.5 H9.5 L11.5 2.5 V13.5 H0.5Z" fill="#FAFCFE" stroke="#8C98A8"/><path d="M2.5 4.5 H9.5 M2.5 6.5 H9.5 M2.5 8.5 H9.5 M2.5 10.5 H9.5" stroke="#B8C4D4"/></svg>
<div class="t" style="left:606px;top:763px;font-size:11px;color:#1a1a1a">...: На склад. Пр...</div>
<div style="left:703px;top:759px;width:114px;height:20px;background:#C4C0BA"></div>
<svg style="position:absolute;left:707px;top:762px" width="14" height="14" viewBox="0 0 14 14"><path d="M0.5 0.5 H9.5 L11.5 2.5 V13.5 H0.5Z" fill="#FAFCFE" stroke="#8C98A8"/><path d="M2.5 4.5 H9.5 M2.5 6.5 H9.5 M2.5 8.5 H9.5 M2.5 10.5 H9.5" stroke="#B8C4D4"/></svg>
<div class="t" style="left:722px;top:763px;font-size:11px;color:#1a1a1a">Заказ-наряд:...:10</div>
<div style="left:819px;top:759px;width:114px;height:20px;background:#C4C0BA"></div>
<svg style="position:absolute;left:823px;top:762px" width="14" height="14" viewBox="0 0 14 14"><path d="M0.5 0.5 H9.5 L11.5 2.5 V13.5 H0.5Z" fill="#FAFCFE" stroke="#8C98A8"/><path d="M2.5 4.5 H9.5 M2.5 6.5 H9.5 M2.5 8.5 H9.5 M2.5 10.5 H9.5" stroke="#B8C4D4"/></svg>
<div class="t" style="left:838px;top:763px;font-size:11px;color:#1a1a1a">Заказ-наряд:...:05</div>
<div style="left:935px;top:759px;width:114px;height:20px;background:#C4C0BA"></div>
<svg style="position:absolute;left:939px;top:762px" width="14" height="14" viewBox="0 0 14 14"><path d="M0.5 0.5 H9.5 L11.5 2.5 V13.5 H0.5Z" fill="#FFFFFF" stroke="#8C98A8"/><rect x="2.5" y="5" width="1.8" height="6.5" fill="#D03020"/><rect x="5" y="7" width="1.8" height="4.5" fill="#E0A020"/><rect x="7.5" y="8" width="1.8" height="3.5" fill="#40A040"/></svg>
<div class="t" style="left:954px;top:763px;font-size:11px;color:#1a1a1a">Вало...: Основная</div>
<div style="left:1051px;top:759px;width:114px;height:20px;background:#C4C0BA"></div>
<svg style="position:absolute;left:1055px;top:762px" width="14" height="14" viewBox="0 0 14 14"><path d="M0.5 0.5 H9.5 L11.5 2.5 V13.5 H0.5Z" fill="#FFFFFF" stroke="#8C98A8"/><rect x="2.5" y="5" width="1.8" height="6.5" fill="#D03020"/><rect x="5" y="7" width="1.8" height="4.5" fill="#E0A020"/><rect x="7.5" y="8" width="1.8" height="3.5" fill="#40A040"/></svg>
<div class="t" style="left:1070px;top:763px;font-size:11px;color:#1a1a1a">Ведо...: Основная</div>
<div style="left:1167px;top:759px;width:114px;height:20px;background:#C4C0BA"></div>
<svg style="position:absolute;left:1171px;top:762px" width="14" height="14" viewBox="0 0 14 14"><rect x="0.5" y="0.5" width="12" height="12" fill="#E8F0FA" stroke="#5880B0"/><circle cx="6" cy="7" r="3.5" fill="#FFF4D0" stroke="#505050" stroke-width="1.2"/><path d="M8.5 9.5 L12 13" stroke="#C07030" stroke-width="2"/></svg>
<div class="t" style="left:1186px;top:763px;font-size:11px;color:#1a1a1a">Управление сай...</div>
<div style="left:1283px;top:759px;width:114px;height:20px;background:#B6CDE9;border:1px solid #A4B8D0"></div>
<svg style="position:absolute;left:1287px;top:762px" width="14" height="14" viewBox="0 0 14 14"><path d="M0.5 0.5 H9.5 L11.5 2.5 V13.5 H0.5Z" fill="#FFFFFF" stroke="#8C98A8"/><rect x="2.5" y="5" width="1.8" height="6.5" fill="#D03020"/><rect x="5" y="7" width="1.8" height="4.5" fill="#E0A020"/><rect x="7.5" y="8" width="1.8" height="3.5" fill="#40A040"/></svg>
<div class="t" style="left:1302px;top:763px;font-size:11px;color:#1E2A3A">XYZ/ABC-анали...</div>
<div style="left:6px;top:781px;width:1305px;height:19px;border-top:1px solid #DCD6CA;border-left:1px solid #DCD6CA;border-bottom:1px solid #FAF8F2;border-right:1px solid #FAF8F2"></div>
<div class="t" style="left:10px;top:785px;font-size:11px;color:#2a2418">Основные операции с данными информационной базы</div>
<div style="left:1316px;top:781px;width:29px;height:19px;border-top:1px solid #DCD6CA;border-left:1px solid #DCD6CA;border-bottom:1px solid #FAF8F2;border-right:1px solid #FAF8F2"></div>
<div class="t" style="left:1320px;top:785px;font-size:11px;color:#A89C80">CAP</div>
<div class="t" style="left:1353px;top:785px;font-size:11px;color:#2a2418">NUM</div>
<svg style="position:absolute;left:1393px;top:787px" width="14" height="13" viewBox="0 0 14 13"><path d="M13 1 L1 13 M13 5 L5 13 M13 9 L9 13" stroke="#B8B0A0" stroke-width="1.2"/></svg>
<div style="left:5px;top:801px;width:1403px;height:2px;background:#DAD6CE"></div>
<div style="left:5px;top:803px;width:1403px;height:4px;background:#F2F2F0"></div>
<div style="left:19px;top:804px;width:1342px;height:3px;background:#FFFFFF;border-top:1px solid #858585"></div>
</body></html>
